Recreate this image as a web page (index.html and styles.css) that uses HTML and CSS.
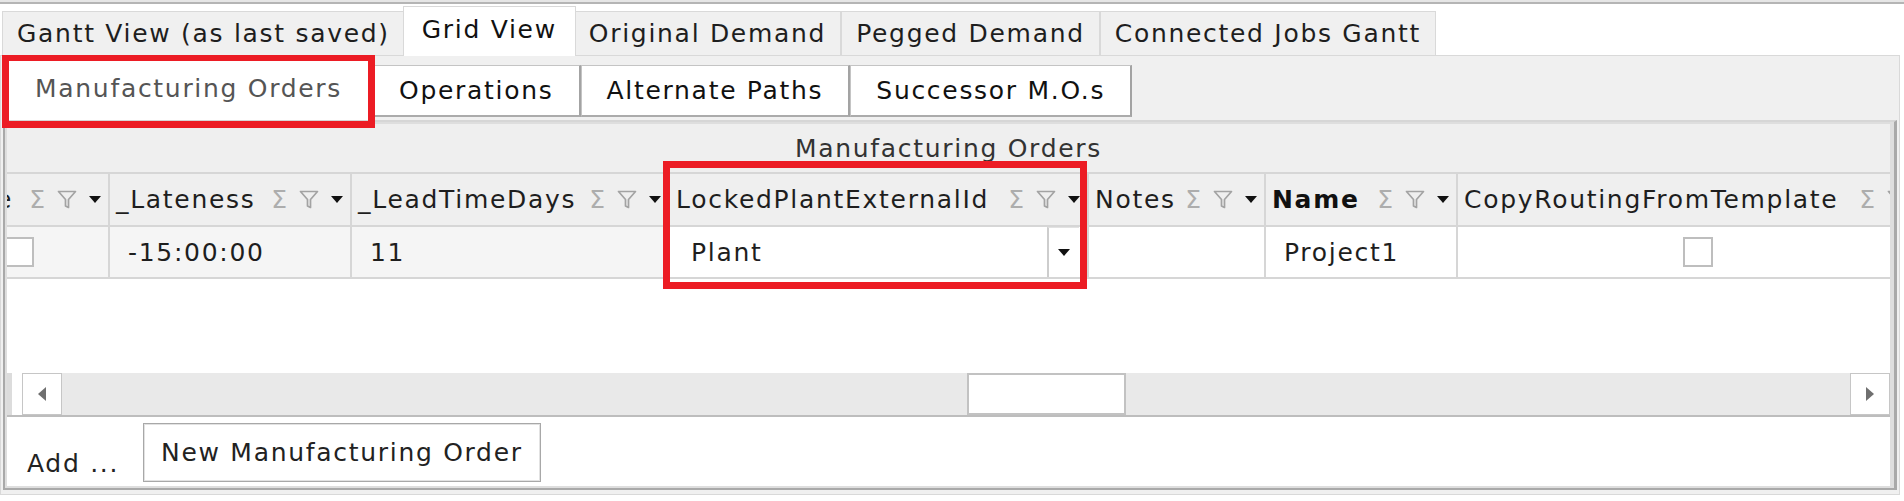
FILE: index.html
```html
<!DOCTYPE html>
<html>
<head>
<meta charset="utf-8">
<title>Grid View</title>
<link rel="stylesheet" href="styles.css">
</head>
<body>
<div class="app">
  <div class="topline"></div>
  <div class="tabs1">
    <div class="tab1">Gantt View (as last saved)</div>
    <div class="tab1 sel">Grid View</div>
    <div class="tab1">Original Demand</div>
    <div class="tab1">Pegged Demand</div>
    <div class="tab1">Connected Jobs Gantt</div>
  </div>
  <div class="page">
    <div class="tabs2">
      <div class="tab2 sel">Manufacturing Orders</div>
      <div class="tab2">Operations</div>
      <div class="tab2">Alternate Paths</div>
      <div class="tab2">Successor M.O.s</div>
    </div>
    <div class="panel">
      <div class="group">Manufacturing Orders</div>
      <div class="viewport">
        <div class="grid">
          <div class="hc"><span class="hl">Value</span><span class="icons"><span class="sig">Σ</span><svg class="flt" viewBox="0 0 20 19"><path d="M1.5 1.5H18.5L11.5 9.5V17.5L8.5 16V9.5Z" fill="none" stroke="#a3a3a3" stroke-width="1.7" stroke-linejoin="round"/></svg><span class="dd"></span></span></div>
          <div class="hc"><span class="hl">_Lateness</span><span class="icons"><span class="sig">Σ</span><svg class="flt" viewBox="0 0 20 19"><path d="M1.5 1.5H18.5L11.5 9.5V17.5L8.5 16V9.5Z" fill="none" stroke="#a3a3a3" stroke-width="1.7" stroke-linejoin="round"/></svg><span class="dd"></span></span></div>
          <div class="hc"><span class="hl">_LeadTimeDays</span><span class="icons"><span class="sig">Σ</span><svg class="flt" viewBox="0 0 20 19"><path d="M1.5 1.5H18.5L11.5 9.5V17.5L8.5 16V9.5Z" fill="none" stroke="#a3a3a3" stroke-width="1.7" stroke-linejoin="round"/></svg><span class="dd"></span></span></div>
          <div class="hc"><span class="hl">LockedPlantExternalId</span><span class="icons"><span class="sig">Σ</span><svg class="flt" viewBox="0 0 20 19"><path d="M1.5 1.5H18.5L11.5 9.5V17.5L8.5 16V9.5Z" fill="none" stroke="#a3a3a3" stroke-width="1.7" stroke-linejoin="round"/></svg><span class="dd"></span></span></div>
          <div class="hc"><span class="hl">Notes</span><span class="icons"><span class="sig">Σ</span><svg class="flt" viewBox="0 0 20 19"><path d="M1.5 1.5H18.5L11.5 9.5V17.5L8.5 16V9.5Z" fill="none" stroke="#a3a3a3" stroke-width="1.7" stroke-linejoin="round"/></svg><span class="dd"></span></span></div>
          <div class="hc bold"><span class="hl">Name</span><span class="icons"><span class="sig">Σ</span><svg class="flt" viewBox="0 0 20 19"><path d="M1.5 1.5H18.5L11.5 9.5V17.5L8.5 16V9.5Z" fill="none" stroke="#a3a3a3" stroke-width="1.7" stroke-linejoin="round"/></svg><span class="dd"></span></span></div>
          <div class="hc"><span class="hl">CopyRoutingFromTemplate</span><span class="icons"><span class="sig">Σ</span><svg class="flt" viewBox="0 0 20 19"><path d="M1.5 1.5H18.5L11.5 9.5V17.5L8.5 16V9.5Z" fill="none" stroke="#a3a3a3" stroke-width="1.7" stroke-linejoin="round"/></svg><span class="dd"></span></span></div>

          <div class="dc ro center"><span class="cb"></span></div>
          <div class="dc ro">-15:00:00</div>
          <div class="dc ro">11</div>
          <div class="dc edit"><span class="val">Plant</span><span class="ddbtn"><span class="dd"></span></span></div>
          <div class="dc"></div>
          <div class="dc">Project1</div>
          <div class="dc center"><span class="cb"></span></div>
        </div>
      </div>
      <div class="empty"></div>
      <div class="hscroll">
        <div class="sb-gap"></div>
        <div class="sb-btn"><span class="arr-l"></span></div>
        <div class="sb-track"><div class="thumb" style="margin-left:905px;width:159px"></div></div>
        <div class="sb-btn"><span class="arr-r"></span></div>
      </div>
      <div class="footer">
        <span class="add">Add ...</span>
        <button class="btn" type="button">New Manufacturing Order</button>
      </div>
    </div>
  </div>
  <div class="annot annot-tab"></div>
  <div class="annot annot-col"></div>
</div>
</body>
</html>
```

FILE: styles.css
```css
* { box-sizing: border-box; }

body {
  margin: 0;
  background: #ffffff;
  font-family: "DejaVu Sans", Verdana, sans-serif;
  font-size: 25px;
  letter-spacing: 1.7px;
  color: #1e1e1e;
}

.app {
  position: relative;
  width: 1904px;
  height: 501px;
  overflow: hidden;
}

.topline {
  height: 4px;
  border-top: 2px solid #e6e6e6;
  background: #b5b5b5;
}

/* top-level tab strip */
.tabs1 {
  display: flex;
  align-items: flex-end;
  height: 49px;
  margin-top: 2px;
  padding-left: 2px;
  position: relative;
  z-index: 1;
}

.tab1 {
  height: 44px;
  padding: 0 14px;
  display: flex;
  align-items: center;
  background: #f0f0f0;
  border: 1px solid #d9d9d9;
  border-bottom: none;
  white-space: nowrap;
}

.tab1.sel {
  height: 50px;
  margin: 0 -2px -1px;
  padding: 0 18px 4px;
  background: #ffffff;
  position: relative;
  z-index: 2;
  color: #111111;
}

/* tab page */
.page {
  margin-right: 4px;
  border: 1px solid #d9d9d9;
  background: #f0f0f0;
  padding: 4px 2px 4px 2px;
}

.tabs2 {
  display: flex;
  align-items: flex-end;
  height: 60px;
  padding-left: 1px;
}

.tab2 {
  height: 52px;
  margin-bottom: 3px;
  padding: 0 25px;
  display: flex;
  align-items: center;
  background: #ffffff;
  border: 1px solid #c4c4c4;
  border-right: 2px solid #a3a3a3;
  border-bottom: 2px solid #ababab;
  white-space: nowrap;
  color: #111111;
}

.tab2.sel {
  height: 60px;
  margin-bottom: 0;
  padding: 0 30px 4px;
  color: #555555;
  border: 1px solid #d0d0d0;
  border-bottom: none;
}

/* grid panel */
.panel {
  border: 2px solid #a9a9a9;
  border-top-color: #d6d6d6;
  border-right-width: 3px;
  padding: 2px 4px 2px 2px;
  background: #dedede;
}

.group {
  height: 50px;
  background: #efefef;
  border-bottom: 2px solid #d6d6d6;
  display: flex;
  align-items: center;
  justify-content: center;
  color: #333333;
}

.viewport {
  overflow: hidden;
  background: #ffffff;
}

.grid {
  display: grid;
  grid-template-columns: 180px 242px 318px 419px 177px 192px 482px;
  margin-left: -77px;
  width: max-content;
}

.hc {
  height: 53px;
  background: #efefef;
  border-right: 2px solid #d6d6d6;
  border-bottom: 2px solid #d6d6d6;
  display: flex;
  align-items: center;
  padding: 0 7px 0 6px;
  white-space: nowrap;
  color: #1e1e1e;
}

.hl {
  flex: 1;
  min-width: 0;
  margin-right: 5px;
}

.hc.bold .hl { font-weight: bold; color: #111111; }

.icons {
  display: flex;
  align-items: center;
  gap: 12px;
  flex-shrink: 0;
}

.sig {
  font-size: 25px;
  line-height: 1;
  letter-spacing: 0;
  color: #adadad;
}

.flt {
  display: block;
  width: 20px;
  height: 19px;
}

.dd {
  width: 0;
  height: 0;
  border-left: 6px solid transparent;
  border-right: 6px solid transparent;
  border-top: 7px solid #111111;
}

.dc {
  height: 52px;
  border-right: 2px solid #d6d6d6;
  border-bottom: 2px solid #d6d6d6;
  display: flex;
  align-items: center;
  padding-left: 18px;
  background: #ffffff;
  white-space: nowrap;
  color: #1e1e1e;
}

.dc.ro { background: #f5f5f5; }

.dc.center {
  justify-content: center;
  padding-left: 0;
}

.cb {
  width: 30px;
  height: 30px;
  border: 2px solid #bebebe;
  background: #ffffff;
}

.dc.edit { padding: 0 8px 0 21px; }
.dc.edit .val { flex: 1; }

.ddbtn {
  width: 32px;
  align-self: stretch;
  border-left: 2px solid #cdcdcd;
  border-top: 1px solid #e2e2e2;
  display: flex;
  align-items: center;
  justify-content: center;
}

.empty {
  height: 94px;
  background: #ffffff;
}

/* horizontal scrollbar */
.hscroll {
  height: 44px;
  display: flex;
  background: #e9e9e9;
  border-bottom: 2px solid #bdbdbd;
}

.sb-gap {
  width: 15px;
  border-left: 5px solid #dcdcdc;
  background: #ffffff;
}

.sb-btn {
  width: 40px;
  background: #ffffff;
  border: 1px solid #c6c6c6;
  display: flex;
  align-items: center;
  justify-content: center;
}

.sb-track {
  flex: 1;
  display: flex;
}

.thumb {
  background: #ffffff;
  border: 2px solid #c2c2c2;
}

.arr-l {
  width: 0;
  height: 0;
  border-top: 7px solid transparent;
  border-bottom: 7px solid transparent;
  border-right: 8px solid #6f6f6f;
}

.arr-r {
  width: 0;
  height: 0;
  border-top: 7px solid transparent;
  border-bottom: 7px solid transparent;
  border-left: 8px solid #6f6f6f;
}

/* footer */
.footer {
  height: 69px;
  background: #ffffff;
  display: flex;
  align-items: flex-start;
  padding: 6px 0 0 20px;
}

.add {
  margin-top: 26px;
  margin-right: 24px;
  line-height: 30px;
  color: #222222;
}

.btn {
  height: 59px;
  margin: 0;
  padding: 0 17px;
  font: inherit;
  letter-spacing: inherit;
  color: #222222;
  background: #ffffff;
  border: 1px solid #a8a8a8;
  box-shadow: inset 0 0 0 1px #e2e2e2;
}

/* red annotation frames */
.annot {
  position: absolute;
  border: 7px solid #ec1c24;
  pointer-events: none;
}

.annot-tab {
  left: 2px;
  top: 54px;
  width: 373px;
  height: 74px;
}

.annot-col {
  left: 663px;
  top: 161px;
  width: 424px;
  height: 128px;
}
```
